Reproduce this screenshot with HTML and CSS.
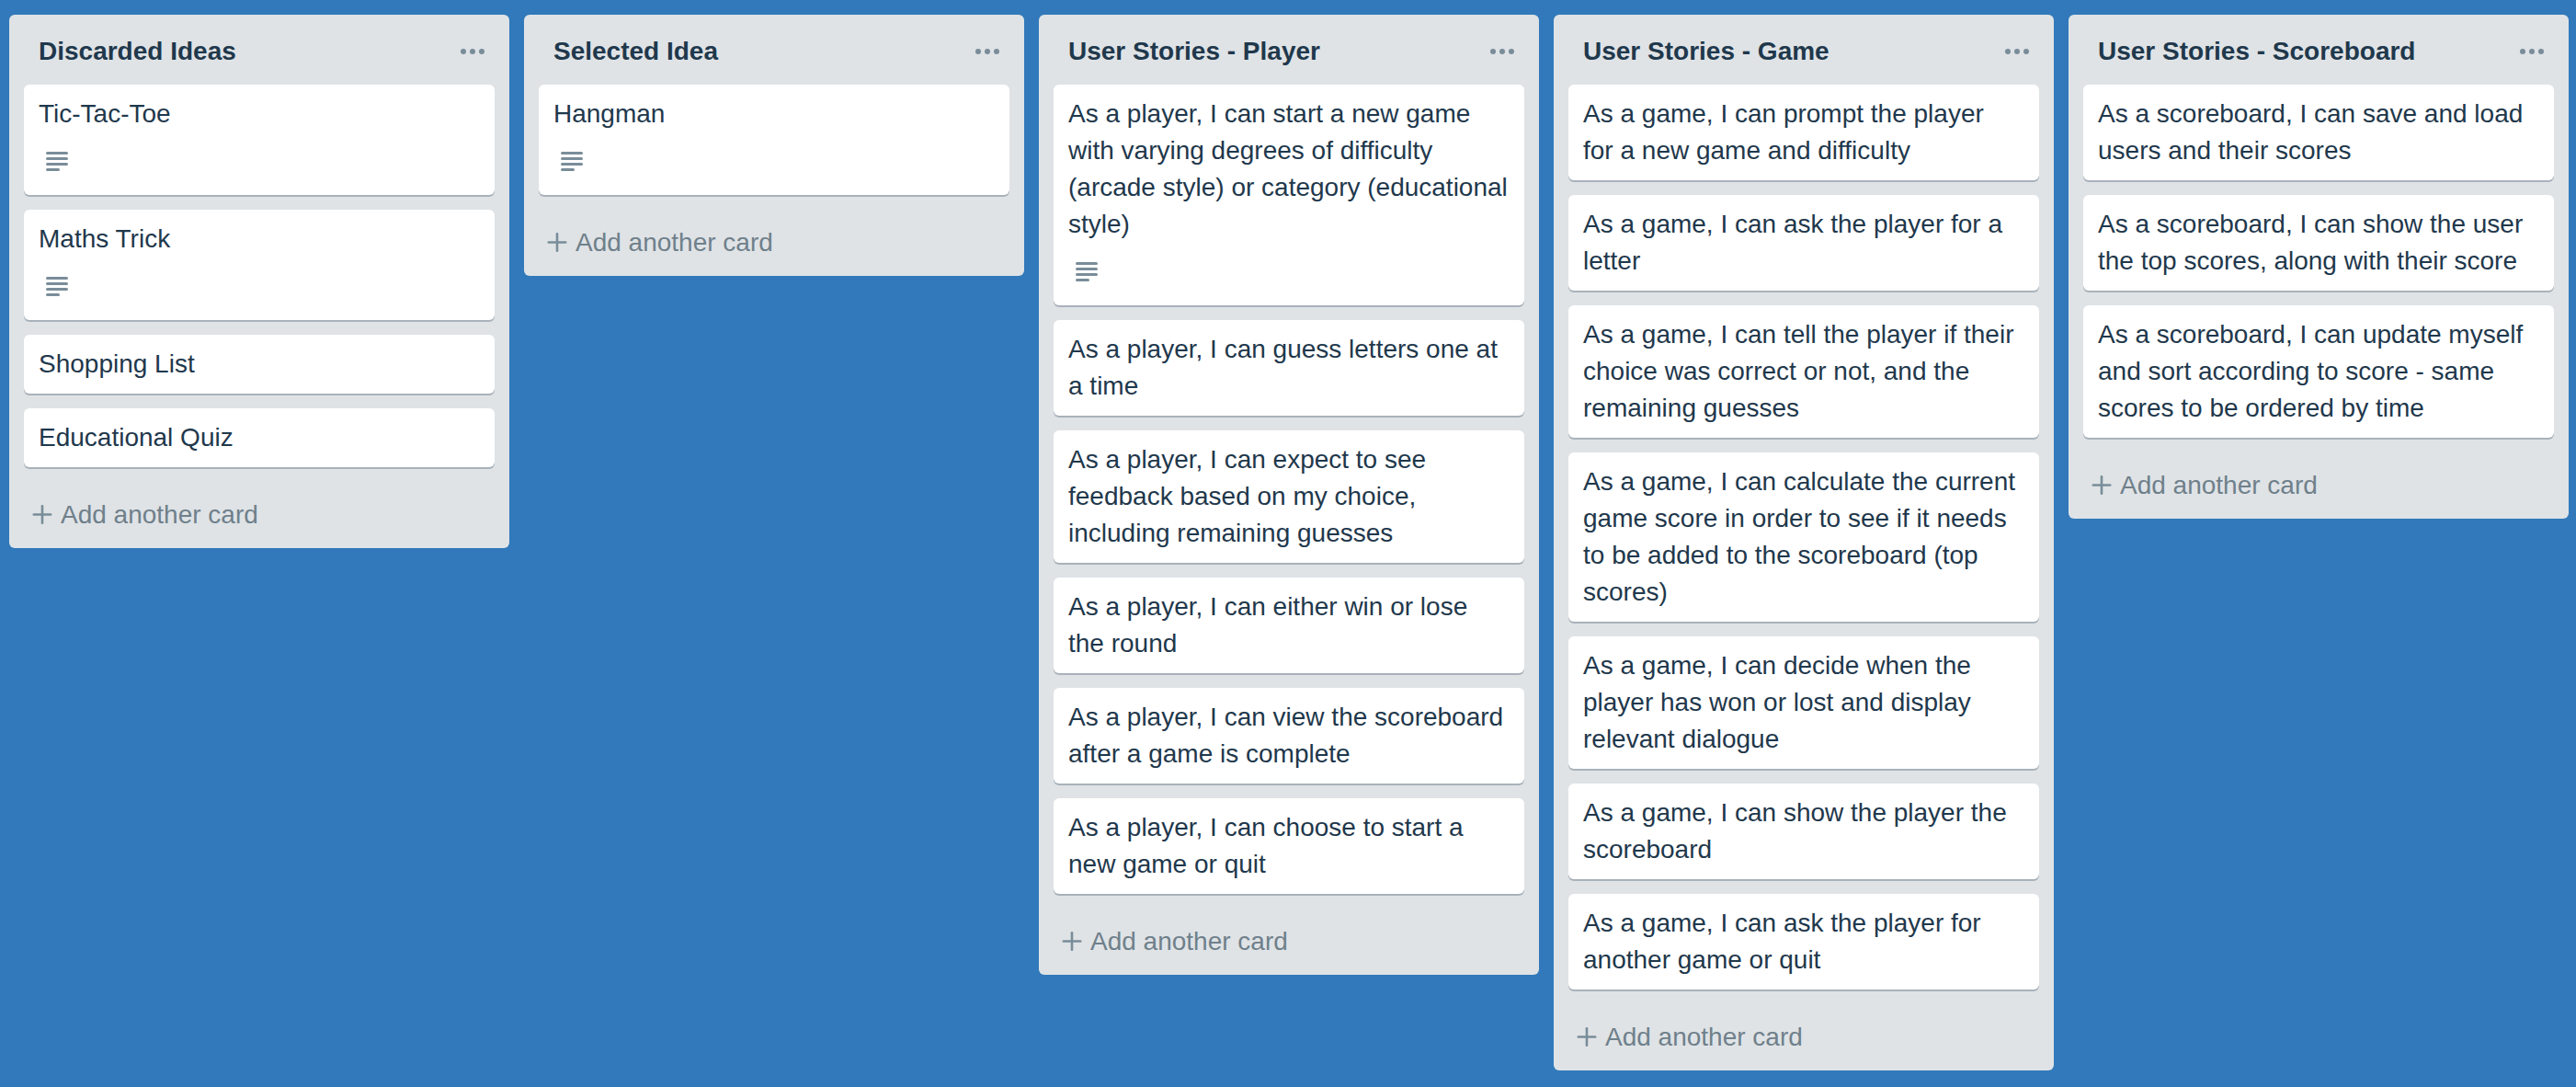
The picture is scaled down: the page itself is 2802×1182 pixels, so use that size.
FILE: index.html
```html
<!DOCTYPE html>
<html lang="en">
<head>
<meta charset="utf-8">
<meta name="viewport" content="width=device-width, initial-scale=1">
<title>Project board</title>
<link rel="stylesheet" href="styles.css">
</head>
<body>
<svg class="sprite" aria-hidden="true">
  <symbol id="icon-more" viewBox="0 0 40 40"><circle cx="10" cy="20" r="3"/><circle cx="20" cy="20" r="3"/><circle cx="30" cy="20" r="3"/></symbol>
  <symbol id="icon-description" viewBox="0 0 40 40"><rect x="8" y="9" width="24" height="3" rx="1.5"/><rect x="8" y="15" width="24" height="3" rx="1.5"/><rect x="8" y="21" width="24" height="3" rx="1.5"/><rect x="8" y="27" width="15" height="3" rx="1.5"/></symbol>
  <symbol id="icon-add" viewBox="0 0 24 24"><rect x="1.5" y="10.2" width="21" height="2.6" rx="1.3"/><rect x="10.7" y="1" width="2.6" height="21" rx="1.3"/></symbol>
</svg>
<main class="board">
  <section class="list">
    <header class="list-header">
      <h2 class="list-title">Discarded Ideas</h2>
      <button class="list-menu" type="button" aria-label="List actions"><svg class="icon"><use href="#icon-more"/></svg></button>
    </header>
    <ul class="cards">
      <li><a class="card" href="#">Tic-Tac-Toe<svg class="icon badge"><use href="#icon-description"/></svg></a></li>
      <li><a class="card" href="#">Maths Trick<svg class="icon badge"><use href="#icon-description"/></svg></a></li>
      <li><a class="card" href="#">Shopping List</a></li>
      <li><a class="card" href="#">Educational Quiz</a></li>
    </ul>
    <button class="add-card" type="button"><svg class="icon add-icon"><use href="#icon-add"/></svg>Add another card</button>
  </section>
  <section class="list">
    <header class="list-header">
      <h2 class="list-title">Selected Idea</h2>
      <button class="list-menu" type="button" aria-label="List actions"><svg class="icon"><use href="#icon-more"/></svg></button>
    </header>
    <ul class="cards">
      <li><a class="card" href="#">Hangman<svg class="icon badge"><use href="#icon-description"/></svg></a></li>
    </ul>
    <button class="add-card" type="button"><svg class="icon add-icon"><use href="#icon-add"/></svg>Add another card</button>
  </section>
  <section class="list">
    <header class="list-header">
      <h2 class="list-title">User Stories - Player</h2>
      <button class="list-menu" type="button" aria-label="List actions"><svg class="icon"><use href="#icon-more"/></svg></button>
    </header>
    <ul class="cards">
      <li><a class="card" href="#">As a player, I can start a new game with varying degrees of difficulty (arcade style) or category (educational style)<svg class="icon badge"><use href="#icon-description"/></svg></a></li>
      <li><a class="card" href="#">As a player, I can guess letters one at a time</a></li>
      <li><a class="card" href="#">As a player, I can expect to see feedback based on my choice, including remaining guesses</a></li>
      <li><a class="card" href="#">As a player, I can either win or lose the round</a></li>
      <li><a class="card" href="#">As a player, I can view the scoreboard after a game is complete</a></li>
      <li><a class="card" href="#">As a player, I can choose to start a new game or quit</a></li>
    </ul>
    <button class="add-card" type="button"><svg class="icon add-icon"><use href="#icon-add"/></svg>Add another card</button>
  </section>
  <section class="list">
    <header class="list-header">
      <h2 class="list-title">User Stories - Game</h2>
      <button class="list-menu" type="button" aria-label="List actions"><svg class="icon"><use href="#icon-more"/></svg></button>
    </header>
    <ul class="cards">
      <li><a class="card" href="#">As a game, I can prompt the player <br>for a new game and difficulty</a></li>
      <li><a class="card" href="#">As a game, I can ask the player for a letter</a></li>
      <li><a class="card" href="#">As a game, I can tell the player if their choice was correct or not, and the remaining guesses</a></li>
      <li><a class="card" href="#">As a game, I can calculate the current game score in order to see if it needs to be added to the scoreboard (top scores)</a></li>
      <li><a class="card" href="#">As a game, I can decide when the player has won or lost and display relevant dialogue</a></li>
      <li><a class="card" href="#">As a game, I can show the player the scoreboard</a></li>
      <li><a class="card" href="#">As a game, I can ask the player for another game or quit</a></li>
    </ul>
    <button class="add-card" type="button"><svg class="icon add-icon"><use href="#icon-add"/></svg>Add another card</button>
  </section>
  <section class="list">
    <header class="list-header">
      <h2 class="list-title">User Stories - Scoreboard</h2>
      <button class="list-menu" type="button" aria-label="List actions"><svg class="icon"><use href="#icon-more"/></svg></button>
    </header>
    <ul class="cards">
      <li><a class="card" href="#">As a scoreboard, I can save and load users and their scores</a></li>
      <li><a class="card" href="#">As a scoreboard, I can show the user the top scores, along with their score</a></li>
      <li><a class="card" href="#">As a scoreboard, I can update myself and sort according to score - same scores to be ordered by time</a></li>
    </ul>
    <button class="add-card" type="button"><svg class="icon add-icon"><use href="#icon-add"/></svg>Add another card</button>
  </section>
</main>
</body>
</html>
```
FILE: styles.css
```css
* {
  box-sizing: border-box;
}

body {
  margin: 0;
  background: #3179ba;
  color: #1f384c;
  font: 28px/40px "Helvetica Neue", "Liberation Sans", Arial, sans-serif;
}

.sprite {
  display: none;
}

.board {
  display: flex;
  align-items: flex-start;
  gap: 16px;
  padding: 16px 8px 16px 10px;
}

.list {
  flex: 1 1 0;
  min-width: 0;
  background: #dfe3e6;
  border-radius: 6px;
}

.list-header {
  display: flex;
  align-items: center;
  justify-content: space-between;
  padding: 20px 20px 16px 32px;
}

.list-title {
  margin: 0;
  font-size: 28px;
  line-height: 40px;
  font-weight: 700;
}

.list-menu,
.add-card {
  display: flex;
  align-items: center;
  border: 0;
  background: none;
  font: inherit;
  cursor: pointer;
}

.list-menu {
  padding: 0;
}

.icon {
  display: block;
  width: 40px;
  height: 40px;
  fill: #798d99;
}

.cards {
  display: flex;
  flex-direction: column;
  gap: 16px;
  margin: 0;
  padding: 0 16px;
  list-style: none;
}

.card {
  display: block;
  padding: 12px 16px;
  border-radius: 6px;
  background: #fff;
  box-shadow: 0 2px 0 #a9b2ba;
  color: inherit;
  text-decoration: none;
}

.badge {
  margin: 12px 0 4px;
}

.add-card {
  gap: 8px;
  width: 100%;
  margin-top: 16px;
  padding: 16px 24px;
  color: #6f808b;
}

.add-icon {
  width: 24px;
  height: 24px;
}
```
